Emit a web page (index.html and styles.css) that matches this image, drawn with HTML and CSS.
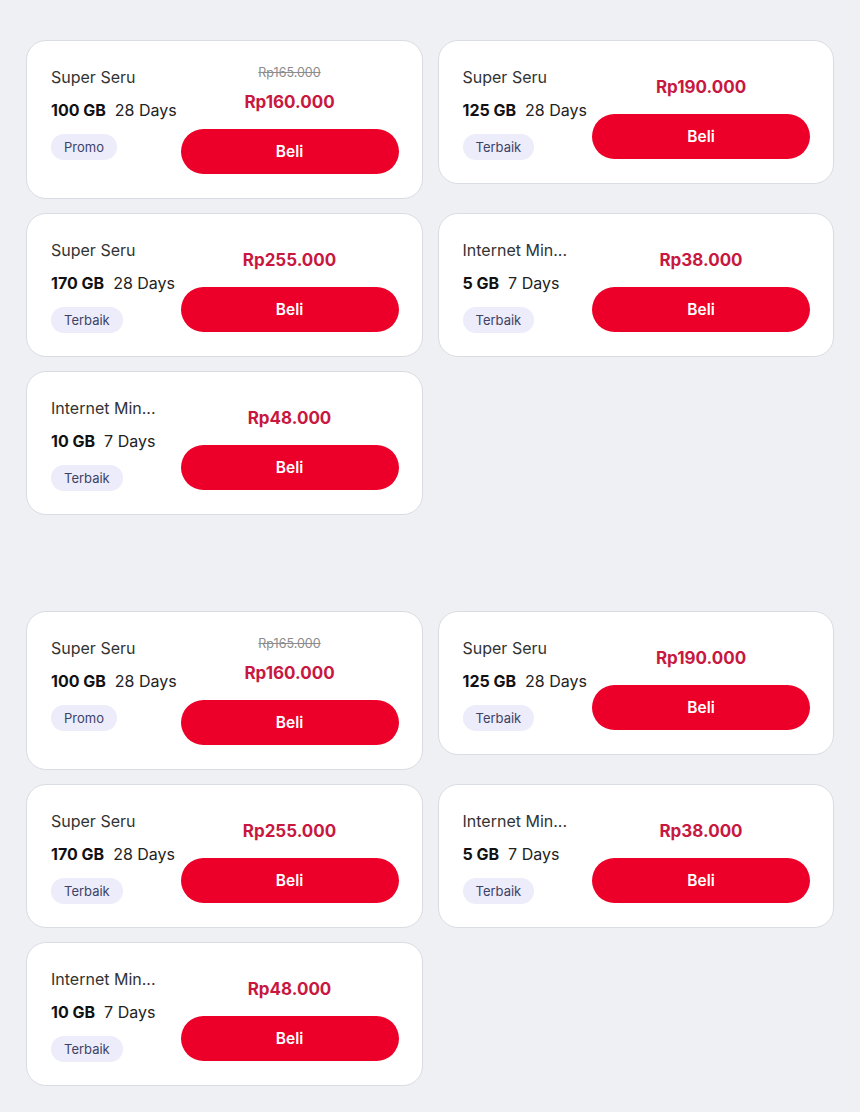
FILE: index.html
```html
<!DOCTYPE html>
<html lang="id">
<head>
<meta charset="utf-8">
<title>Paket Internet</title>
<link rel="stylesheet" href="styles.css">
</head>
<body>
<main class="page">
  <section class="grid">
    <article class="card">
      <div class="info">
        <div class="title">Super Seru</div>
        <div class="quota"><b>100 GB</b><span>28 Days</span></div>
        <span class="badge">Promo</span>
      </div>
      <div class="buy">
        <div class="old">Rp165.000</div>
        <div class="price">Rp160.000</div>
        <button class="btn">Beli</button>
      </div>
    </article>
    <article class="card">
      <div class="info">
        <div class="title">Super Seru</div>
        <div class="quota"><b>125 GB</b><span>28 Days</span></div>
        <span class="badge">Terbaik</span>
      </div>
      <div class="buy">
        <div class="price">Rp190.000</div>
        <button class="btn">Beli</button>
      </div>
    </article>
    <article class="card">
      <div class="info">
        <div class="title">Super Seru</div>
        <div class="quota"><b>170 GB</b><span>28 Days</span></div>
        <span class="badge">Terbaik</span>
      </div>
      <div class="buy">
        <div class="price">Rp255.000</div>
        <button class="btn">Beli</button>
      </div>
    </article>
    <article class="card">
      <div class="info">
        <div class="title">Internet Min...</div>
        <div class="quota"><b>5 GB</b><span>7 Days</span></div>
        <span class="badge">Terbaik</span>
      </div>
      <div class="buy">
        <div class="price">Rp38.000</div>
        <button class="btn">Beli</button>
      </div>
    </article>
    <article class="card">
      <div class="info">
        <div class="title">Internet Min...</div>
        <div class="quota"><b>10 GB</b><span>7 Days</span></div>
        <span class="badge">Terbaik</span>
      </div>
      <div class="buy">
        <div class="price">Rp48.000</div>
        <button class="btn">Beli</button>
      </div>
    </article>
  </section>

  <section class="grid second">
    <article class="card">
      <div class="info">
        <div class="title">Super Seru</div>
        <div class="quota"><b>100 GB</b><span>28 Days</span></div>
        <span class="badge">Promo</span>
      </div>
      <div class="buy">
        <div class="old">Rp165.000</div>
        <div class="price">Rp160.000</div>
        <button class="btn">Beli</button>
      </div>
    </article>
    <article class="card">
      <div class="info">
        <div class="title">Super Seru</div>
        <div class="quota"><b>125 GB</b><span>28 Days</span></div>
        <span class="badge">Terbaik</span>
      </div>
      <div class="buy">
        <div class="price">Rp190.000</div>
        <button class="btn">Beli</button>
      </div>
    </article>
    <article class="card">
      <div class="info">
        <div class="title">Super Seru</div>
        <div class="quota"><b>170 GB</b><span>28 Days</span></div>
        <span class="badge">Terbaik</span>
      </div>
      <div class="buy">
        <div class="price">Rp255.000</div>
        <button class="btn">Beli</button>
      </div>
    </article>
    <article class="card">
      <div class="info">
        <div class="title">Internet Min...</div>
        <div class="quota"><b>5 GB</b><span>7 Days</span></div>
        <span class="badge">Terbaik</span>
      </div>
      <div class="buy">
        <div class="price">Rp38.000</div>
        <button class="btn">Beli</button>
      </div>
    </article>
    <article class="card">
      <div class="info">
        <div class="title">Internet Min...</div>
        <div class="quota"><b>10 GB</b><span>7 Days</span></div>
        <span class="badge">Terbaik</span>
      </div>
      <div class="buy">
        <div class="price">Rp48.000</div>
        <button class="btn">Beli</button>
      </div>
    </article>
  </section>
</main>
</body>
</html>
```
FILE: styles.css
```css
* { box-sizing: border-box; }

body {
  margin: 0;
  background: #eef0f4;
  font-family: Inter, "Noto Sans", "Liberation Sans", sans-serif;
  color: #222;
}

.page {
  padding: 40px 26px 30px;
}

.grid {
  display: grid;
  grid-template-columns: 1fr 1fr;
  gap: 14px 15px;
  align-items: start;
}

.second {
  margin-top: 96px;
}

.card {
  background: #fff;
  border: 1px solid #d9dce2;
  border-radius: 20px;
  padding: 24px 23px 23px 24px;
  display: grid;
  grid-template-columns: 1fr 218px;
}

.info {
  align-self: start;
  display: flex;
  flex-direction: column;
  align-items: flex-start;
  min-width: 0;
}

.title {
  font-size: 16px;
  line-height: 24px;
  color: #333;
  white-space: nowrap;
}

.quota {
  margin-top: 9px;
  font-size: 16px;
  line-height: 24px;
  color: #222;
  white-space: nowrap;
}

.quota b {
  font-weight: 700;
  color: #111;
  margin-right: 9px;
}

.badge {
  margin-top: 12px;
  height: 26px;
  line-height: 26px;
  padding: 0 13px;
  border-radius: 13px;
  background: #ececfa;
  color: #3e4266;
  font-size: 13px;
}

.buy {
  align-self: end;
  margin-bottom: 1px;
  display: flex;
  flex-direction: column;
  align-items: center;
}

.old {
  font-size: 12.5px;
  line-height: 16px;
  color: #8c8c8c;
  text-decoration: line-through;
  margin-bottom: 9px;
}

.price {
  font-size: 17px;
  line-height: 24px;
  font-weight: 700;
  color: #c8183f;
  margin-bottom: 15px;
}

.btn {
  width: 218px;
  height: 45px;
  border: none;
  border-radius: 23px;
  background: #ec0029;
  color: #fff;
  font-family: inherit;
  font-size: 15.5px;
  font-weight: 600;
  padding: 0;
}
```
